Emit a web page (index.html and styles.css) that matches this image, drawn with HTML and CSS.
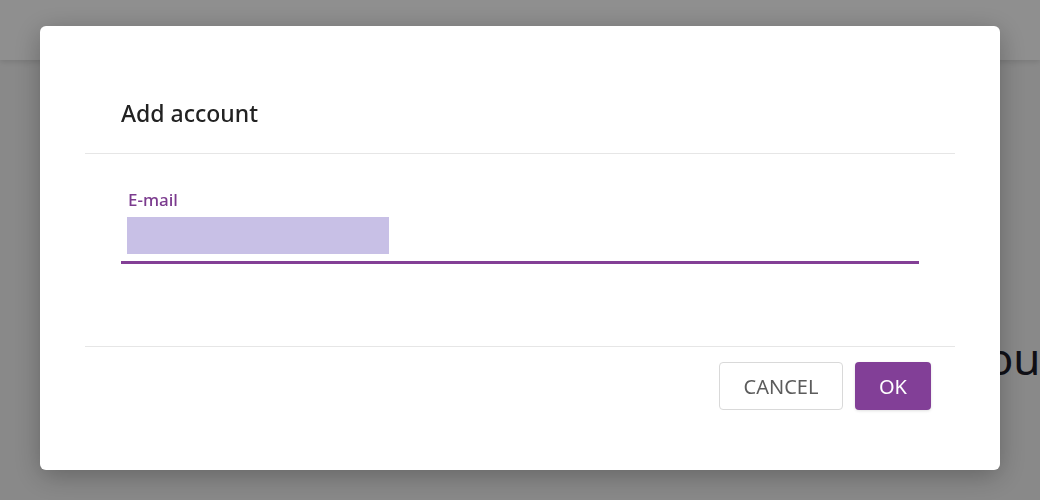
FILE: index.html
```html
<!DOCTYPE html>
<html lang="en">
<head>
<meta charset="utf-8">
<title>Add account</title>
<link rel="stylesheet" href="styles.css">
</head>
<body>
<div class="page">
  <header class="topbar"></header>
  <main class="content">
    <h1 class="page-title">Your accounts</h1>
  </main>
</div>
<div class="backdrop"></div>
<div class="modal" role="dialog" aria-labelledby="dlg-title">
  <div class="modal-header">
    <h2 id="dlg-title" class="modal-title">Add account</h2>
  </div>
  <div class="modal-body">
    <div class="field">
      <label class="field-label" for="email">E-mail</label>
      <div class="field-input"><span class="autofill"></span></div>
    </div>
  </div>
  <div class="modal-footer">
    <button class="btn btn-cancel">CANCEL</button>
    <button class="btn btn-ok">OK</button>
  </div>
</div>
</body>
</html>
```
FILE: styles.css
```css
* { box-sizing: border-box; }
html, body { margin: 0; padding: 0; }
body {
  width: 1040px;
  height: 500px;
  overflow: hidden;
  background: #f5f5f5;
  font-family: "Noto Sans", "Open Sans", sans-serif;
  color: #222;
}
.page { display: flex; flex-direction: column; height: 500px; }
.topbar {
  height: 60px;
  background: #fff;
  box-shadow: 0 2px 6px rgba(0,0,0,0.12);
}
.content {
  padding: 268px 0 0 964px;
  overflow: hidden;
}
.page-title {
  margin: 0;
  font-size: 44px;
  font-weight: 400;
  line-height: 60px;
  color: #1c1c28;
  white-space: nowrap;
}
.backdrop {
  position: fixed;
  inset: 0;
  background: rgba(0,0,0,0.44);
}
.modal {
  position: fixed;
  left: 40px;
  top: 26px;
  width: 960px;
  height: 444px;
  background: #fff;
  border-radius: 6px;
  padding: 0 45px;
  display: flex;
  flex-direction: column;
  box-shadow: 0 6px 28px rgba(0,0,0,0.28);
}
.modal-header {
  height: 128px;
  padding: 71px 0 0 36px;
  border-bottom: 1px solid #e6e6e6;
}
.modal-title {
  margin: 0;
  font-size: 23px;
  font-weight: 500;
  line-height: 32px;
  color: #222;
}
.modal-body {
  height: 192px;
  padding: 35px 36px 0;
}
.field-label {
  display: block;
  margin-left: 7px;
  font-size: 17px;
  font-weight: 500;
  line-height: 22px;
  color: #7b3b8e;
}
.field-input {
  margin-top: 6px;
  height: 47px;
  padding: 0 6px;
  border-bottom: 3px solid #833f96;
}
.autofill {
  display: block;
  width: 262px;
  height: 37px;
  background: #c8c0e6;
}
.modal-footer {
  border-top: 1px solid #e6e6e6;
  padding: 15px 24px 0 0;
  display: flex;
  justify-content: flex-end;
  gap: 12px;
}
.btn {
  height: 48px;
  border-radius: 4px;
  font-family: "Noto Sans", "Open Sans", sans-serif;
  font-size: 20px;
  padding: 0;
  cursor: pointer;
}
.btn-cancel {
  width: 124px;
  background: #fff;
  border: 1px solid #d9d9d9;
  color: #5c5c5c;
}
.btn-ok {
  width: 76px;
  background: #823f97;
  border: none;
  color: #fff;
  box-shadow: 0 1px 3px rgba(0,0,0,0.12);
}
```
